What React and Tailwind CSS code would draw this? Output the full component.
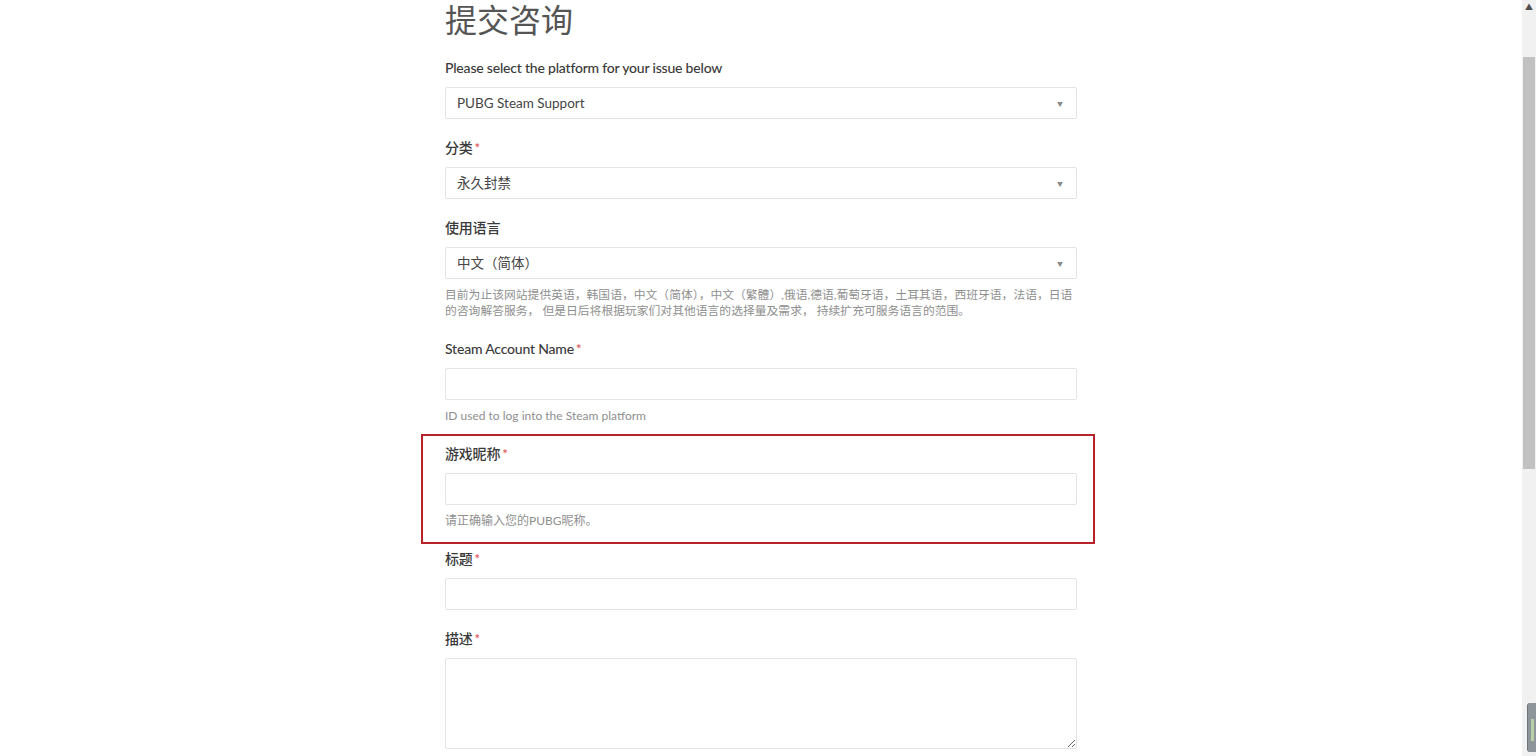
import React from "react";

const font = { fontFamily: "Lato, 'Noto Sans CJK SC', sans-serif" };

const Req = () => <span className="text-[#e0474c] ml-[2px] text-[13px] align-top">*</span>;

const Label = ({ children, required }) => (
  <label className="block h-5 leading-5 mb-[9px] text-[14px] tracking-[-0.2px] font-medium text-[#3a3a3a]">
    {children}
    {required && <Req />}
  </label>
);

const Select = ({ value }) => (
  <div className="h-8 flex items-center justify-between pl-[11px] pr-[13px] border border-[#e4e4e4] rounded-[2px] bg-white text-[13.5px] text-[#444]">
    <span>{value}</span>
    <span className="text-[6px] text-[#888]">▼</span>
  </div>
);

const Input = () => (
  <input type="text" className="block w-full h-8 border border-[#e4e4e4] rounded-[2px] bg-white px-3 outline-none" />
);

const Help = ({ children }) => (
  <p className="mt-2 text-[12px] leading-4 text-[#8f8f8f]">{children}</p>
);

const App = () => {
  return (
    <div className="w-full h-[756px] flex bg-white overflow-hidden" style={font}>
      <div className="flex-1 flex justify-center">
        <div className="w-[632px]">
          <h1 className="h-[39px] leading-[39px] text-[32px] text-[#555] font-normal mb-[19px]">提交咨询</h1>

          <div className="mb-[19px]">
            <Label>Please select the platform for your issue below</Label>
            <Select value="PUBG Steam Support" />
          </div>

          <div className="mb-[19px]">
            <Label required>分类</Label>
            <Select value="永久封禁" />
          </div>

          <div className="mb-[20px]">
            <Label>使用语言</Label>
            <Select value="中文（简体）" />
            <p className="mt-2 text-[11.8px] leading-4 text-[#8f8f8f] whitespace-nowrap">
              目前为止该网站提供英语，韩国语，中文（简体），中文（繁體）,俄语,德语,葡萄牙语，土耳其语，西班牙语，法语，日语
              <br />
              的咨询解答服务， 但是日后将根据玩家们对其他语言的选择量及需求， 持续扩充可服务语言的范围。
            </p>
          </div>

          <div className="mb-[20px]">
            <Label required>Steam Account Name</Label>
            <Input />
            <Help>ID used to log into the Steam platform</Help>
          </div>

          <div className="relative mb-[20px]">
            <div className="absolute top-[-10px] left-[-24px] right-[-18px] bottom-[-15px] border-2 border-[#b8232b] pointer-events-none" />
            <Label required>游戏昵称</Label>
            <Input />
            <Help>请正确输入您的PUBG昵称。</Help>
          </div>

          <div className="mb-[19px]">
            <Label required>标题</Label>
            <Input />
          </div>

          <div>
            <Label required>描述</Label>
            <textarea className="block w-full h-[91px] border border-[#e4e4e4] rounded-[2px] bg-white p-2 resize-y outline-none" />
          </div>
        </div>
      </div>

      <div className="relative w-[14px] bg-[#f1f1f1] flex flex-col items-center">
        <span className="mt-[2px] text-[8px] leading-[10px] text-[#505050]">▲</span>
        <div className="mt-[45px] w-[12px] h-[412px] bg-[#c1c1c1]" />
        <div className="absolute right-0 top-[703px] w-[9px] h-[49px] rounded-l-[3px] bg-[#8f969b] border-l border-[#6d7479]">
          <div className="mx-auto mt-[16px] w-[3px] h-[22px] bg-[#b9cfa6]" />
        </div>
      </div>
    </div>
  );
};

export default App;
